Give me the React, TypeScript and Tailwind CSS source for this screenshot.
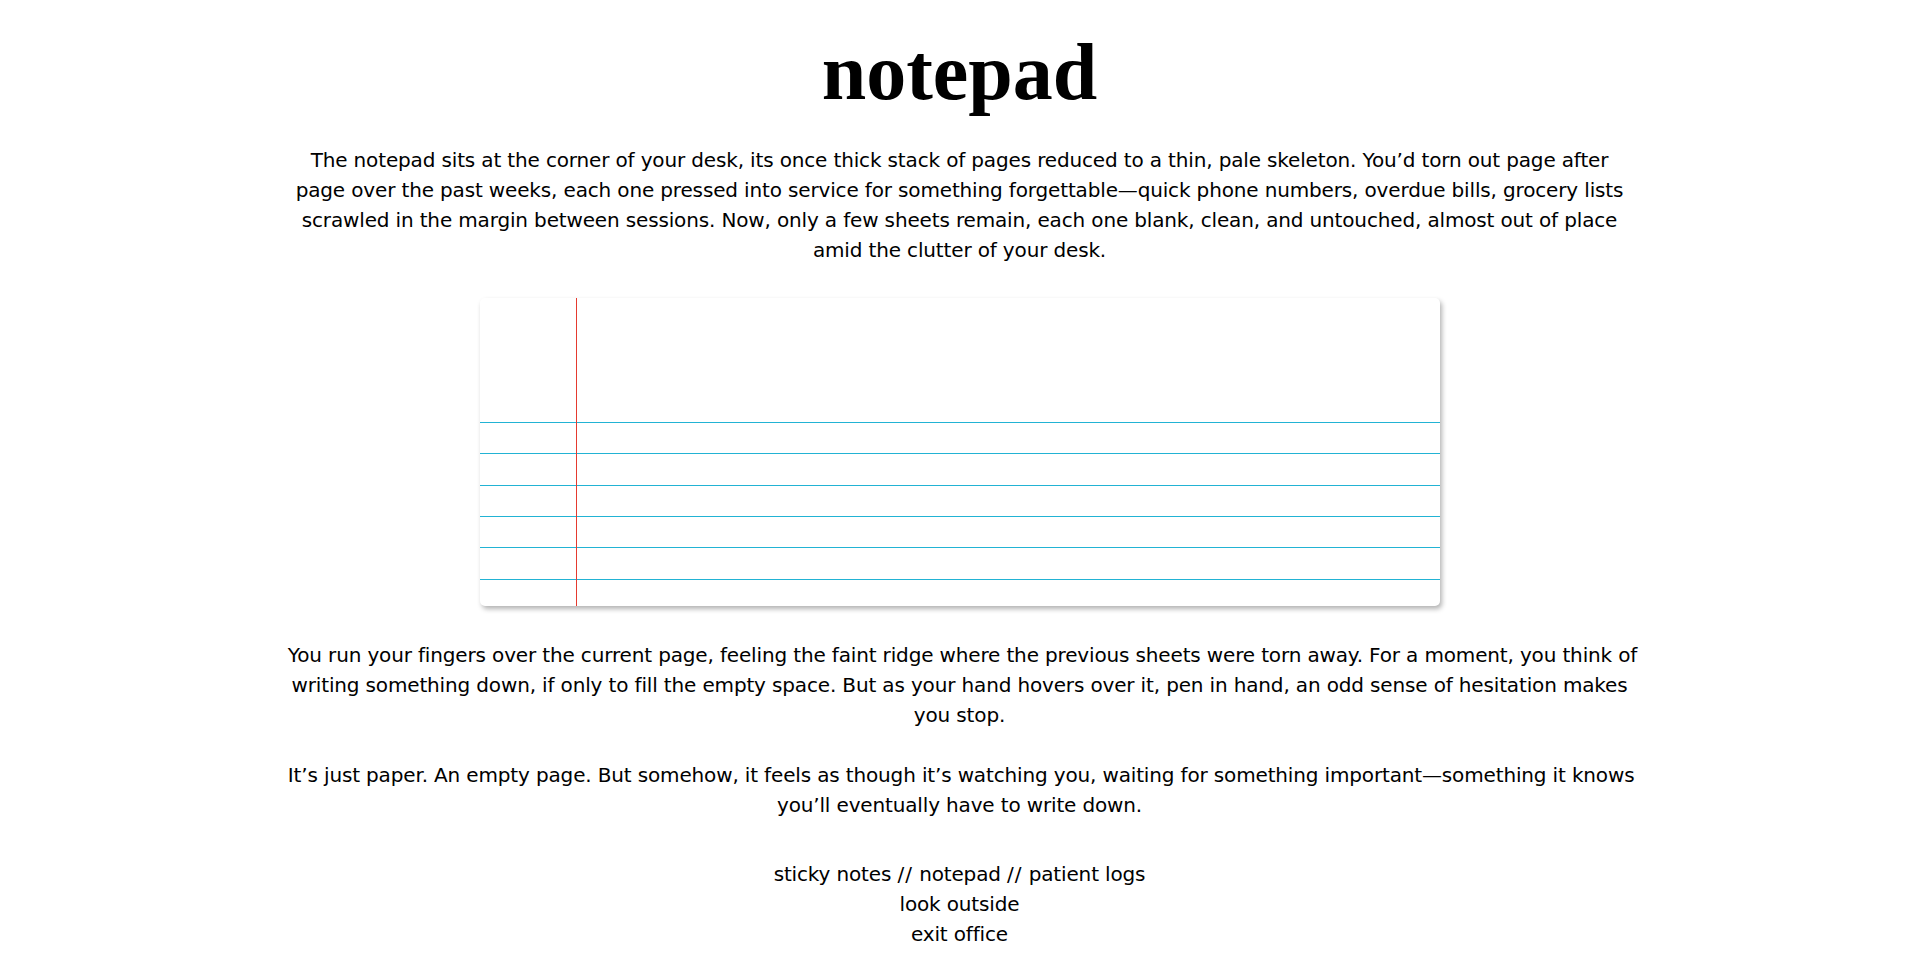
const LINES = 6;

const INTRO = [
  "The notepad sits at the corner of your desk, its once thick stack of pages reduced to a thin, pale skeleton. You’d torn out page after",
  "page over the past weeks, each one pressed into service for something forgettable—quick phone numbers, overdue bills, grocery lists",
  "scrawled in the margin between sessions. Now, only a few sheets remain, each one blank, clean, and untouched, almost out of place",
  "amid the clutter of your desk.",
];

const FINGERS = [
  "You run your fingers over the current page, feeling the faint ridge where the previous sheets were torn away. For a moment, you think of",
  "writing something down, if only to fill the empty space. But as your hand hovers over it, pen in hand, an odd sense of hesitation makes",
  "you stop.",
];

const PAPER = [
  "It’s just paper. An empty page. But somehow, it feels as though it’s watching you, waiting for something important—something it knows",
  "you’ll eventually have to write down.",
];

function Para({ lines, className }: { lines: string[]; className?: string }) {
  return (
    <p className={`w-[70%] text-center ${className ?? ""}`}>
      {lines.map((l, i) => (
        <span key={i} className="block whitespace-nowrap">
          {l}
        </span>
      ))}
    </p>
  );
}

function Notepad() {
  return (
    <div className="relative w-[960px] h-[308px] bg-white rounded-[5px] shadow-[2px_3px_5px_rgba(0,0,0,0.3)] overflow-hidden flex flex-col">
      <div className="h-[124px] shrink-0" />
      {Array.from({ length: LINES }).map((_, i) => (
        <div key={i} className="h-[31.33px] shrink-0 border-t border-[#22b3d4]" />
      ))}
      {/* margin line */}
      <div className="absolute left-[96px] top-0 bottom-0 w-px bg-[#e53a2f]" />
    </div>
  );
}

export default function App() {
  return (
    <div className="min-h-screen bg-white text-black flex flex-col items-center font-['DejaVu_Sans',sans-serif] text-[20px] leading-[30px] tracking-[-0.15px]">
      <h1 className="mt-[32px] font-['Liberation_Serif',serif] font-bold text-[80px] leading-none tracking-normal">
        notepad
      </h1>

      <Para lines={INTRO} className="mt-[33px]" />

      <div className="mt-[33px]">
        <Notepad />
      </div>

      <Para lines={FINGERS} className="mt-[34px]" />

      <Para lines={PAPER} className="mt-[30px]" />

      <nav className="mt-[39px] flex flex-col items-center">
        <div>
          <a href="#">sticky notes</a> <span className="tracking-[1px]">//</span> <a href="#">notepad</a>{" "}
          <span className="tracking-[1px]">//</span> <a href="#">patient logs</a>
        </div>
        <a href="#">look outside</a>
        <a href="#">exit office</a>
      </nav>
    </div>
  );
}
